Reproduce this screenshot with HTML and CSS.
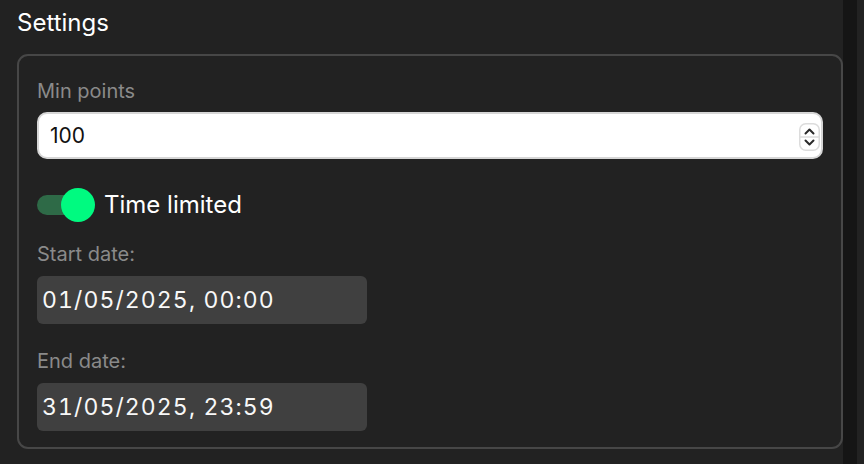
FILE: index.html
```html
<!DOCTYPE html>
<html lang="en">
<head>
<meta charset="utf-8">
<title>Settings</title>
<link rel="stylesheet" href="styles.css">
</head>
<body>
<div class="page">
  <main class="main">
    <h2 class="title">Settings</h2>
    <section class="box">
      <div class="field">
        <div class="label">Min points</div>
        <div class="num-input">
          <span class="num-value">100</span>
          <svg class="spin" width="21" height="28" viewBox="0 0 21 28">
            <rect x="0.75" y="0.75" width="19.5" height="26.5" rx="6" fill="#fff" stroke="#dcdcdc" stroke-width="1.5"/>
            <line x1="1" y1="14" x2="20" y2="14" stroke="#dcdcdc" stroke-width="1.5"/>
            <path d="M6.5 10.5 L10.5 6.5 L14.5 10.5" fill="none" stroke="#2a2a2a" stroke-width="2" stroke-linecap="round" stroke-linejoin="round"/>
            <path d="M6.5 17.5 L10.5 21.5 L14.5 17.5" fill="none" stroke="#2a2a2a" stroke-width="2" stroke-linecap="round" stroke-linejoin="round"/>
          </svg>
        </div>
      </div>
      <div class="toggle-row">
        <span class="switch"><span class="track"></span><span class="knob"></span></span>
        <span class="toggle-text">Time limited</span>
      </div>
      <div class="field field-date">
        <div class="label">Start date:</div>
        <div class="date-input">01/05/2025, 00:00</div>
      </div>
      <div class="field field-date2">
        <div class="label">End date:</div>
        <div class="date-input">31/05/2025, 23:59</div>
      </div>
    </section>
  </main>
  <div class="strip"></div>
  <div class="edge"></div>
</div>
</body>
</html>
```
FILE: styles.css
```css
html, body {
  margin: 0;
  padding: 0;
  background: #222222;
  height: 100%;
  overflow: hidden;
}
body {
  font-family: Inter, "Noto Sans", sans-serif;
  color: #ffffff;
}
.page {
  display: flex;
  height: 464px;
}
.main {
  flex: 1;
  padding: 8px 0 0 17px;
  box-sizing: border-box;
}
.strip {
  width: 14px;
  background: #151515;
}
.edge {
  width: 7px;
  background: #222222;
}
.title {
  margin: 0;
  font-size: 24px;
  font-weight: 400;
  line-height: 30px;
}
.box {
  margin-top: 16px;
  border: 2px solid #474747;
  border-radius: 11px;
  padding: 23px 18px 16px 18px;
}
.label {
  font-size: 20px;
  line-height: 24px;
  color: #8a8a8a;
}
.num-input {
  position: relative;
  margin-top: 9px;
  height: 47px;
  box-sizing: border-box;
  background: #ffffff;
  border: 2px solid #d6d6d6;
  border-radius: 10px;
  display: flex;
  align-items: center;
  padding-left: 11px;
}
.num-value {
  color: #111111;
  font-size: 21px;
}
.spin {
  position: absolute;
  right: 1px;
  top: 9px;
}
.toggle-row {
  display: flex;
  align-items: center;
  margin-top: 29px;
  height: 34px;
}
.switch {
  position: relative;
  width: 58px;
  height: 34px;
  display: inline-block;
}
.track {
  position: absolute;
  left: 0;
  top: 7px;
  width: 50px;
  height: 20px;
  border-radius: 10px;
  background: #2e6a47;
}
.knob {
  position: absolute;
  left: 24px;
  top: 0;
  width: 34px;
  height: 34px;
  border-radius: 50%;
  background: #00fa80;
}
.toggle-text {
  margin-left: 9px;
  font-size: 24px;
  line-height: 30px;
}
.field-date {
  margin-top: 20px;
}
.field-date2 {
  margin-top: 25px;
}
.date-input {
  margin-top: 10px;
  width: 330px;
  height: 48px;
  box-sizing: border-box;
  background: #404040;
  border-radius: 6px;
  padding-left: 5px;
  display: flex;
  align-items: center;
  font-size: 23px;
  letter-spacing: 1.1px;
  font-variant-numeric: tabular-nums;
  color: #f8f8f8;
}
```
